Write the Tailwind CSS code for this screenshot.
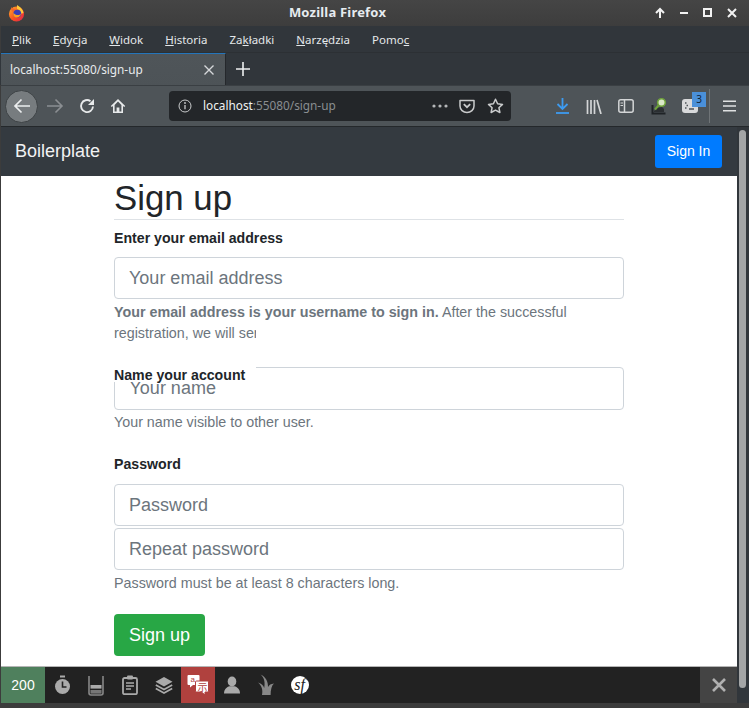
<!DOCTYPE html>
<html lang="en">
<head>
  <meta charset="UTF-8" />
  <meta name="viewport" content="width=device-width, initial-scale=1.0" />
  <title>Sign up</title>
  <script src="https://cdn.jsdelivr.net/npm/@tailwindcss/browser@4"></script>
</head>
<body class="bg-[#3c3c3c] overflow-hidden">
  <div class="w-[749px] h-[708px] flex flex-col overflow-hidden font-['Noto_Sans',sans-serif] bg-[#3c3c3c] pl-px">

    <!-- window title -->
    <div class="relative h-[26px] shrink-0 flex items-center justify-center -ml-px pr-[74px] bg-gradient-to-b from-[#454545] to-[#3d3d3d] text-[13px] font-bold text-[#e6ebef]">
      <svg class="absolute left-[8px] top-[4px]" width="17" height="18" viewBox="0 0 17 18">
        <defs>
          <linearGradient id="fx" x1="0" y1="0" x2="1" y2="1"><stop offset="0" stop-color="#ffb02e"/><stop offset="0.55" stop-color="#f9501f"/><stop offset="1" stop-color="#d81f5b"/></linearGradient>
        </defs>
        <circle cx="8.5" cy="10" r="7.6" fill="url(#fx)"/>
        <path d="M3 3 C3 6 3.5 7 5 8 L8 5 C6 5 4 4.5 3 3Z" fill="#f4672a"/>
        <path d="M9 1 C12 3 15 5 15.5 9 L12.5 10 C12.5 7 11 5.5 9 5Z" fill="#ffc93a"/>
        <circle cx="9.3" cy="9.6" r="3.9" fill="#3b3fb5"/>
        <path d="M5.4 9 C7 11 11 12 13 9.8 C12.5 13 9 14.5 6.8 13 C5.5 12.2 5.2 10.5 5.4 9Z" fill="#ff9d1e"/>
      </svg>
      <span class="tracking-[0.2px]">Mozilla Firefox</span>
      <div class="absolute right-0 top-0 h-[26px] flex items-center">
        <svg class="absolute right-[83px] top-[7px]" width="12" height="12" viewBox="0 0 12 12"><path d="M6 11V2M2 6l4-4 4 4" fill="none" stroke="#f2f2f2" stroke-width="2"/></svg>
        <svg class="absolute right-[59px] top-[7px]" width="12" height="12" viewBox="0 0 12 12"><path d="M2 6h8" stroke="#f2f2f2" stroke-width="2"/></svg>
        <svg class="absolute right-[35px] top-[7px]" width="12" height="12" viewBox="0 0 12 12"><rect x="2" y="2" width="7" height="7" fill="none" stroke="#f2f2f2" stroke-width="2"/></svg>
        <svg class="absolute right-[11px] top-[7px]" width="12" height="12" viewBox="0 0 12 12"><path d="M2 2l8 8M10 2l-8 8" stroke="#f2f2f2" stroke-width="2"/></svg>
      </div>
    </div>

    <!-- menu -->
    <div class="h-[27px] shrink-0 flex items-center gap-[22px] pl-[11px] pt-px bg-[#31363b] text-[11.5px] text-[#e4e8ea] border-b border-[#2c3034]">
      <span><u>P</u>lik</span>
      <span><u>E</u>dycja</span>
      <span><u>W</u>idok</span>
      <span><u>H</u>istoria</span>
      <span>Za<u>k</u>ładki</span>
      <span><u>N</u>arzędzia</span>
      <span>Pomo<u>c</u></span>
    </div>

    <!-- tabs -->
    <div class="h-[32px] shrink-0 flex bg-[#31363b] -ml-px pl-px">
      <div class="w-[225px] h-[33px] flex items-center justify-between pl-[9px] pr-[9px] border-t border-[#2475bb] border-r border-r-[#25282c] bg-gradient-to-b from-[#4f5559] to-[#4d5357] text-[11.8px] text-[#e8ebed]">
        <span>localhost:55080/sign-up</span>
        <svg width="14" height="14" viewBox="0 0 14 14"><path d="M2.5 2.5l9 9M11.5 2.5l-9 9" stroke="#d6d8da" stroke-width="1.4"/></svg>
      </div>
      <div class="w-[34px] flex items-center justify-center">
        <svg width="16" height="16" viewBox="0 0 16 16"><path d="M8 1v14M1 8h14" stroke="#eef0f1" stroke-width="1.6"/></svg>
      </div>
    </div>

    <!-- nav bar -->
    <div class="relative h-[42px] shrink-0 flex items-center bg-[#4e5458] border-t border-[#3a3f43] border-b border-b-[#24282b]">
      <div class="ml-[4px] w-[33px] h-[33px] rounded-full bg-[#777c7f] border border-[#3d4245] flex items-center justify-center">
        <svg width="18" height="16" viewBox="0 0 18 16"><path d="M17 8H2M8.5 1.5L2 8l6.5 6.5" fill="none" stroke="#eceeef" stroke-width="1.7"/></svg>
      </div>
      <svg class="ml-[8px]" width="18" height="16" viewBox="0 0 18 16"><path d="M1 8h15M9.5 1.5L16 8l-6.5 6.5" fill="none" stroke="#8b8f92" stroke-width="1.6"/></svg>
      <svg class="ml-[15px]" width="16" height="16" viewBox="0 0 16 16"><path d="M14 8.5A6 6 0 1 1 11.5 3.2" fill="none" stroke="#e8eaeb" stroke-width="1.9"/><path d="M15 1v6h-6z" fill="#e8eaeb"/></svg>
      <svg class="ml-[15px]" width="16" height="16" viewBox="0 0 16 16"><path d="M8 1L.8 8l1 1L3 8v7h10V8l1.2 1 1-1z" fill="#e8eaeb"/><path d="M8 3.6L4.6 7v6.4h2V9.5h2.800v3.900h2V7z" fill="#4e5458"/><rect x="7" y="10" width="2" height="4" fill="#e8eaeb"/></svg>

      <div class="ml-[43px] w-[342px] h-[30px] flex items-center rounded-[4px] bg-[#232629] pl-[9px]">
        <svg width="14" height="14" viewBox="0 0 14 14"><circle cx="7" cy="7" r="6" fill="none" stroke="#c8cacb" stroke-width="1"/><path d="M7 6v4.2" stroke="#c8cacb" stroke-width="1.3"/><circle cx="7" cy="4" r="0.9" fill="#c8cacb"/></svg>
        <span class="ml-[11px] text-[11.8px] text-[#f0f2f3]">localhost<span class="text-[#8a8e91]">:55080/sign-up</span></span>
        <svg class="ml-auto" width="16" height="4" viewBox="0 0 16 4"><circle cx="2" cy="2" r="1.6" fill="#b5b7b9"/><circle cx="8" cy="2" r="1.6" fill="#b5b7b9"/><circle cx="14" cy="2" r="1.6" fill="#b5b7b9"/></svg>
        <svg class="ml-[11px]" width="16" height="16" viewBox="0 0 16 16"><path d="M1 2.5h14V8a7 6.5 0 0 1-14 0z" fill="none" stroke="#c9cbcc" stroke-width="1.5" stroke-linejoin="round"/><path d="M4.8 6.2L8 9.2l3.2-3" fill="none" stroke="#c9cbcc" stroke-width="1.8"/></svg>
        <svg class="ml-[12px] mr-[7px]" width="17" height="16" viewBox="0 0 17 16"><path d="M8.5 1.3l2.1 4.5 4.9.6-3.6 3.3 1 4.8-4.4-2.4-4.4 2.4 1-4.800L1.500 6.400l4.900-.6z" fill="none" stroke="#c9cbcc" stroke-width="1.5" stroke-linejoin="round"/></svg>
      </div>

      <svg class="ml-[44px]" width="15" height="16" viewBox="0 0 15 16"><path d="M7.5 0v10.500M2.500 6l5 5 5-5" fill="none" stroke="#3d9bf0" stroke-width="1.8"/><path d="M1 15h13" stroke="#3d9bf0" stroke-width="1.8"/></svg>
      <svg class="ml-[16px]" width="16" height="15" viewBox="0 0 16 15"><path d="M1.500 1v14M5 1v14M8.500 1v14M11 1l4 14" fill="none" stroke="#d3d5d6" stroke-width="1.7"/></svg>
      <svg class="ml-[16px]" width="16" height="14" viewBox="0 0 16 14"><rect x="0.8" y="0.8" width="14.4" height="12.4" rx="2" fill="none" stroke="#d3d5d6" stroke-width="1.5"/><path d="M6.500 1v12" stroke="#d3d5d6" stroke-width="1.5"/><path d="M2.500 4h2.500M2.500 6.500h2.500" stroke="#d3d5d6"/></svg>
      <svg class="ml-[17px]" width="17" height="18" viewBox="0 0 17 18"><path d="M1.500 8v8.500h13" fill="none" stroke="#1f2326" stroke-width="2"/><path d="M3 15h10v-3l-2-2-5 1-3 3z" fill="#2b2f32"/><circle cx="10.500" cy="5.500" r="3.800" fill="#dbe8c8" stroke="#6fa33b" stroke-width="1.6"/><path d="M7.500 8.500L4 12.500" stroke="#6fa33b" stroke-width="2"/></svg>
      <div class="relative ml-[14px] w-[16px] h-[14px] rounded-[3px] bg-[#d9dadb]">
        <svg class="absolute left-0 top-0" width="16" height="14" viewBox="0 0 16 14"><path d="M3 4h1.500M4.500 6.500h1.500M3 9h1.500M7 10h5" fill="none" stroke="#4e5458" stroke-width="1.4"/></svg>
        <span class="absolute left-[10px] -top-[7px] w-[14px] h-[15px] bg-[#4a90d9] text-[10px] leading-[14px] text-center text-[#10243a]">3</span>
      </div>
      <div class="ml-[11px] w-px h-[34px] bg-[#6f7477]"></div>
      <svg class="ml-[13px]" width="13" height="12" viewBox="0 0 13 12"><path d="M0 1.200h13M0 6h13M0 10.800h13" stroke="#dfe1e2" stroke-width="1.6"/></svg>
    </div>

    <!-- page + toolbar, scrollbar runs down next to both -->
    <div class="h-[576px] shrink-0 flex">
      <div class="w-[736px] shrink-0 flex flex-col">
        <div class="h-[540px] shrink-0 overflow-hidden bg-white border-b border-[#b5b5b5] font-['Liberation_Sans',sans-serif]">
          <nav class="h-[49px] flex items-center justify-between pl-[14px] pr-[15px] bg-[#343a40]">
            <span class="text-[18px] text-[#f1f2f3]">Boilerplate</span>
            <button class="w-[67px] h-[33px] rounded-[3px] bg-[#007bff] text-[14px] text-white">Sign In</button>
          </nav>

          <main class="ml-[113px] w-[510px]">
            <h1 class="h-[43px] text-[34.8px] leading-[43px] text-[#212529] border-b border-[#dee2e6] box-content">Sign up</h1>

            <label class="block mt-[9px] h-[19px] text-[14.15px] leading-[19px] font-bold text-[#212529]">Enter your email address</label>
            <input class="block mt-[9px] w-full h-[42px] px-[14px] rounded-[4px] border border-[#ced4da] text-[18px] placeholder:text-[#6c757d]" placeholder="Your email address" />
            <p class="mt-[3px] h-[21px] text-[14.3px] leading-[21px] text-[#6c757d] whitespace-nowrap"><b>Your email address is your username to sign in.</b> After the successful</p>
            <p class="h-[21px] w-[142px] overflow-hidden text-[14.3px] leading-[21px] text-[#6c757d] whitespace-nowrap">registration, we will ser</p>

            <input class="block mt-[23px] w-full h-[43px] px-[14.5px] rounded-[4px] border border-[#ced4da] text-[18px] placeholder:text-[#6c757d]" placeholder="Your name" />
            <label class="relative block -mt-[50px] mb-[32px] w-[142px] h-[22px] pt-[6px] bg-white text-[14.15px] leading-[19px] font-bold text-[#212529]">Name your account</label>
            <p class="h-[21px] -mt-[2px] text-[14.3px] leading-[21px] text-[#6c757d]">Your name visible to other user.</p>

            <label class="block mt-[22px] h-[19px] text-[14.15px] leading-[19px] font-bold text-[#212529]">Password</label>
            <input class="block mt-[10px] w-full h-[42px] px-[14px] rounded-[4px] border border-[#ced4da] text-[18px] placeholder:text-[#6c757d]" placeholder="Password" />
            <input class="block mt-[2px] w-full h-[42px] px-[14px] rounded-[4px] border border-[#ced4da] text-[18px] placeholder:text-[#6c757d]" placeholder="Repeat password" />
            <p class="mt-[3px] h-[21px] text-[14.3px] leading-[21px] text-[#6c757d]">Password must be at least 8 characters long.</p>

            <button class="mt-[20px] w-[91px] h-[42px] rounded-[4px] bg-[#28a745] text-[18px] text-white">Sign up</button>
          </main>
        </div>

        <!-- symfony toolbar -->
        <div class="h-[36px] shrink-0 flex items-stretch bg-[#222] font-['Liberation_Sans',sans-serif]">
          <div class="w-[44px] flex items-center justify-center bg-[#4f805d] text-[14px] text-white">200</div>

          <div class="w-[34px] flex items-center justify-center">
            <svg width="17" height="20" viewBox="0 0 17 20"><rect x="6" y="0.5" width="5" height="2" fill="#aaa"/><circle cx="8.5" cy="11.5" r="7.5" fill="#aaa"/><path d="M8.5 6.500v5.500h4" fill="none" stroke="#222" stroke-width="1.6"/></svg>
          </div>
          <div class="w-[34px] flex items-center justify-center">
            <svg width="16" height="21" viewBox="0 0 16 21"><path d="M1 1v17a2 2 0 0 0 2 2h10a2 2 0 0 0 2-2V1" fill="none" stroke="#888" stroke-width="1.6"/><rect x="2.500" y="10" width="11" height="3.600" fill="#aaa"/><rect x="2.500" y="15" width="11" height="3.600" fill="#777"/></svg>
          </div>
          <div class="w-[34px] flex items-center justify-center">
            <svg width="16" height="20" viewBox="0 0 16 20"><rect x="1" y="3" width="14" height="16.2" rx="1.5" fill="none" stroke="#aaa" stroke-width="1.8"/><rect x="5" y="0.5" width="6" height="4" rx="1" fill="#aaa"/><path d="M4 8h8M4 11h8M4 14h5" stroke="#aaa" stroke-width="1.6"/></svg>
          </div>
          <div class="w-[34px] flex items-center justify-center">
            <svg width="18" height="18" viewBox="0 0 18 18"><path d="M9 1l8.500 4.800L9 10.500.5 5.800z" fill="#aaa"/><path d="M.8 9L9 13.500 17.200 9M.8 12.500L9 17l8.200-4.500" fill="none" stroke="#aaa" stroke-width="1.7"/></svg>
          </div>
          <div class="w-[34px] flex items-center justify-center bg-[#b0413e]">
            <svg width="22" height="22" viewBox="0 0 22 22">
              <path d="M1.500 1h10a1 1 0 0 1 1 1v8a1 1 0 0 1-1 1H6l-3 2.500V11H1.500a1 1 0 0 1-1-1V2a1 1 0 0 1 1-1z" fill="#fff"/>
              <path d="M9.500 7h11a1 1 0 0 1 1 1v9a1 1 0 0 1-1 1H18v3l-3.500-3H9.500a1 1 0 0 1-1-1V8a1 1 0 0 1 1-1z" fill="#fff" stroke="#b0413e"/>
              <text x="3.500" y="7.500" font-size="8" fill="#b0413e" font-family="Liberation Sans">a</text>
              <text x="10.500" y="16.500" font-size="10" fill="#b0413e" font-family="Noto Sans CJK SC">示</text>
            </svg>
          </div>
          <div class="w-[34px] flex items-center justify-center">
            <svg width="18" height="18" viewBox="0 0 18 18"><ellipse cx="9" cy="5.500" rx="4.300" ry="5" fill="#aaa"/><path d="M1 17.500c0-4.500 3-6.500 5.500-7.200h5c2.500.7 5.500 2.700 5.500 7.200z" fill="#aaa"/></svg>
          </div>
          <div class="w-[34px] flex items-center justify-center">
            <svg width="18" height="22" viewBox="0 0 18 22"><path d="M5 21C6 16 5 12 1 8.500 4.500 9.500 6.500 11.500 7.200 14 8.200 8.500 7.500 4 3.500 0.500 9 3 11.200 8 11 13c1-2 3-3.200 6-3.500-2.300 2-3.400 6-3.400 11.500z" fill="#888"/></svg>
          </div>
          <div class="w-[34px] flex items-center justify-center">
            <svg width="18" height="18" viewBox="0 0 18 18"><circle cx="9" cy="9" r="9" fill="#fff"/><text x="8.500" y="14" text-anchor="middle" font-size="16" font-style="italic" font-family="Liberation Serif" fill="#222">sf</text></svg>
          </div>

          <div class="ml-auto w-[37px] flex items-center justify-center bg-[#444]">
            <svg width="16" height="16" viewBox="0 0 16 16"><path d="M2 2l12 12M14 2L2 14" stroke="#b0b0b0" stroke-width="2.6"/></svg>
          </div>
        </div>
      </div>

      <!-- scrollbar -->
      <div class="w-[12px] h-full bg-[#31363b] pt-[3px] pl-[2px]">
        <div class="w-[7px] h-[558px] rounded-full bg-[#a3a5a6]"></div>
      </div>
    </div>
  </div>
</body>
</html>
